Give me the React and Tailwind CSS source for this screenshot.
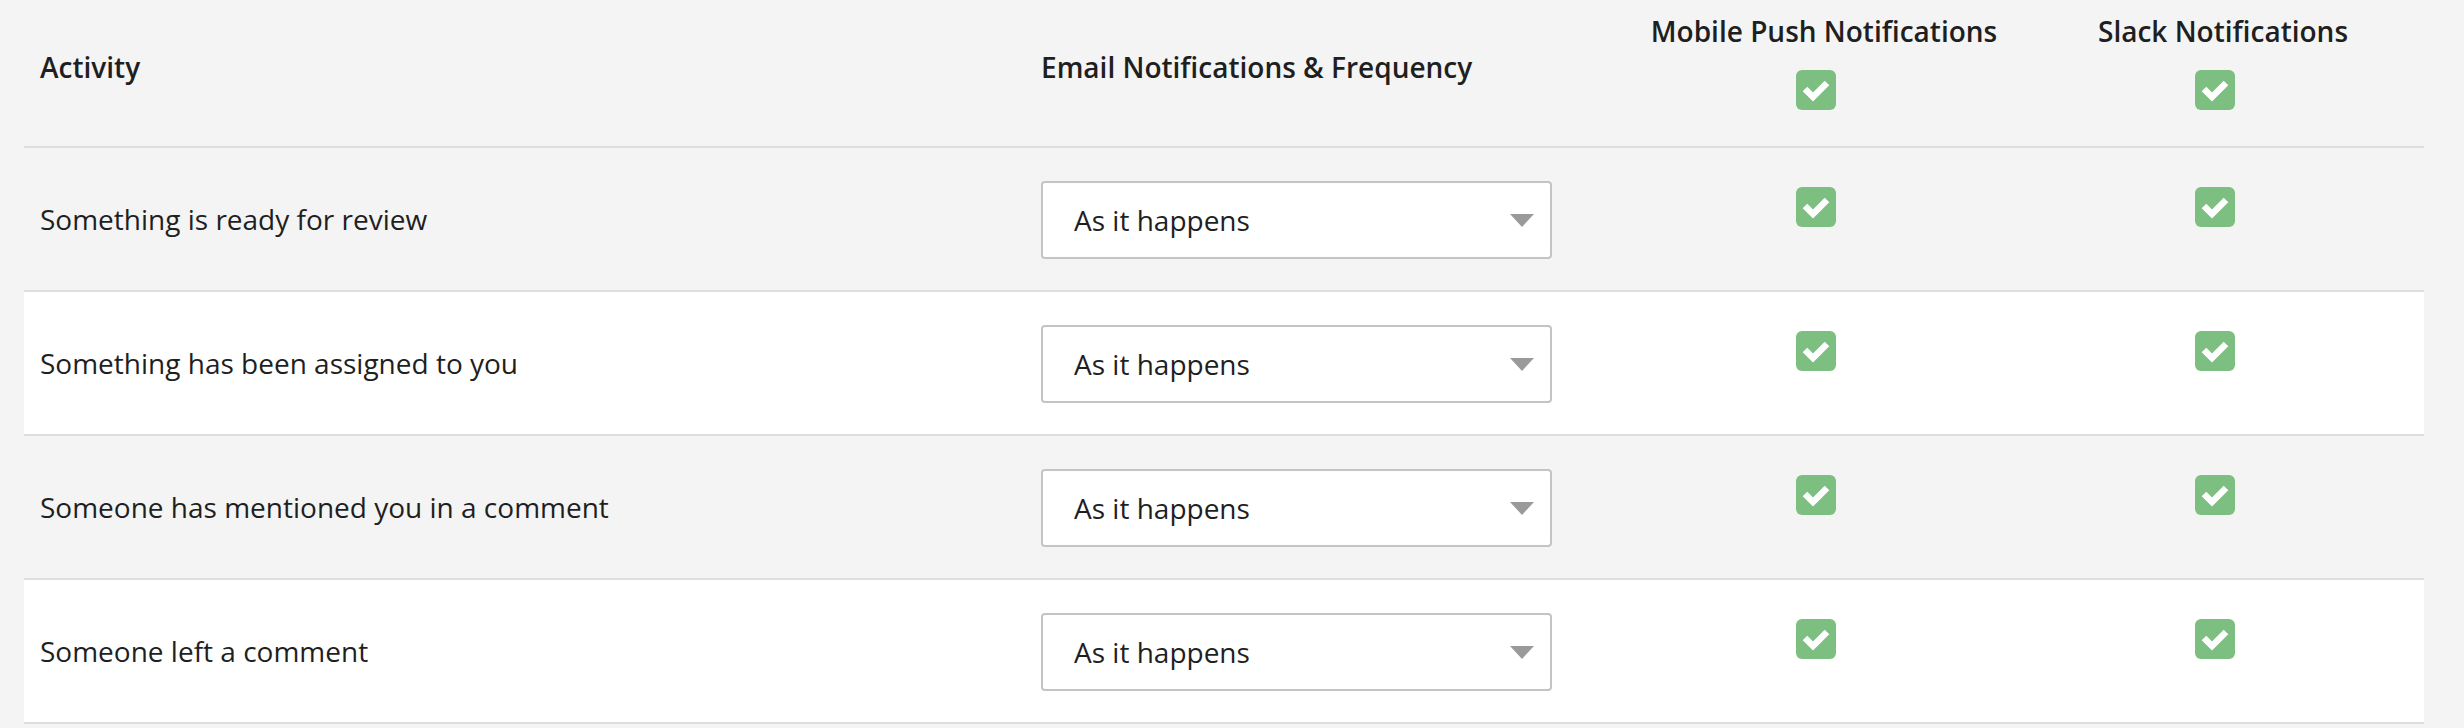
import React from 'react';

const rows = [
  { label: 'Something is ready for review', bg: 'bg-[#f4f4f4]' },
  { label: 'Something has been assigned to you', bg: 'bg-white' },
  { label: 'Someone has mentioned you in a comment', bg: 'bg-[#f4f4f4]' },
  { label: 'Someone left a comment', bg: 'bg-white' },
];

const CheckBox = () => (
  <svg width="40" height="40" viewBox="0 0 40 40" className="block">
    <rect x="0" y="0" width="40" height="40" rx="6" fill="#7dbe81" />
    <polyline
      points="9,19 17,27 31,13"
      fill="none"
      stroke="#ffffff"
      strokeWidth="6.5"
      strokeLinejoin="miter"
    />
  </svg>
);

const FrequencySelect = () => (
  <div className="flex items-center justify-between w-[511px] h-[78px] bg-white border-2 border-[#c4c4c4] rounded-[4px] pl-[31px] pr-[16px]">
    <span>As it happens</span>
    <svg width="24" height="13" viewBox="0 0 24 13">
      <polygon points="0,0 24,0 12,13" fill="#9a9a9a" />
    </svg>
  </div>
);

const App = () => {
  return (
    <div
      className="min-h-screen bg-[#f4f4f4] pl-[24px] text-[28px] text-[#1f1f1f]"
      style={{ fontFamily: '"Open Sans", "Liberation Sans", sans-serif' }}
    >
      <div className="w-[2400px]">
        {/* Header */}
        <div className="grid grid-cols-[1001px_601px_396px_402px] h-[148px] border-b-2 border-[#dedede] font-semibold">
          <div className="flex items-center px-4 pb-3">Activity</div>
          <div className="flex items-center px-4 pb-3">Email Notifications &amp; Frequency</div>
          <div className="flex flex-col items-center pt-3">
            <span className="leading-[38px]">Mobile Push Notifications</span>
            <div className="mt-5 mr-4">
              <CheckBox />
            </div>
          </div>
          <div className="flex flex-col items-center pt-3">
            <span className="leading-[38px]">Slack Notifications</span>
            <div className="mt-5 mr-4">
              <CheckBox />
            </div>
          </div>
        </div>

        {rows.map((row) => (
          <div
            key={row.label}
            className={`grid grid-cols-[1001px_601px_396px_402px] h-[144px] border-b-2 border-[#dedede] ${row.bg}`}
          >
            <div className="flex items-center px-4">{row.label}</div>
            <div className="flex items-center px-4 pt-[2px]">
              <FrequencySelect />
            </div>
            <div className="flex justify-center pt-[39px]">
              <div className="mr-4">
                <CheckBox />
              </div>
            </div>
            <div className="flex justify-center pt-[39px]">
              <div className="mr-4">
                <CheckBox />
              </div>
            </div>
          </div>
        ))}
      </div>
    </div>
  );
};

export default App;
